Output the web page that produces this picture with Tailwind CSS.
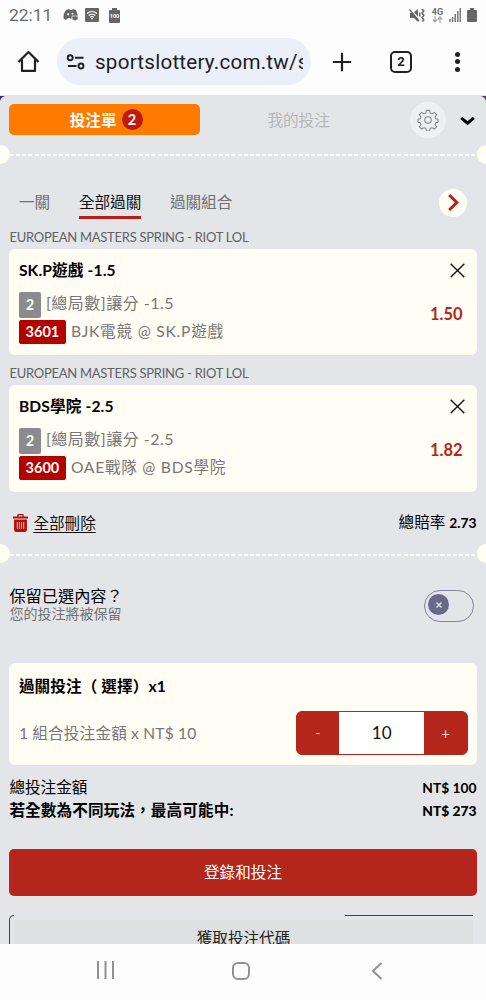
<!DOCTYPE html>
<html lang="zh-Hant">
<head>
<meta charset="utf-8">
<title>投注單</title>
<script src="https://cdn.jsdelivr.net/npm/@tailwindcss/browser@4"></script>
</head>
<body class="w-[486px] h-[1000px] overflow-hidden bg-[#fdfdfd] flex flex-col font-[Lato,'Noto_Sans_CJK_TC',sans-serif] text-black whitespace-nowrap">

<!-- status bar -->
<header class="h-[30px] mb-px shrink-0 flex items-center pl-[9px] pr-[9px] text-[#6b6b6b] font-[Roboto,sans-serif]">
  <span class="text-[17.400px] leading-[30px] w-[54px]">22:11</span>
  <svg class="w-[15px] h-[14px]" viewBox="0 0 15 14"><path fill="#666" d="M3 2 6 1l1 1h2l1-1 3 1 2 6H9.500l-1 3-2-1H5l-2 2-2.500-1.500Q0 6 3 2z"/><circle cx="5.200" cy="6.300" r="1.100" fill="#fff"/><circle cx="9.500" cy="5.800" r="1" fill="#fff"/><path fill="#666" stroke="#fff" stroke-width=".7" d="M9 8h6v4h-2l-1 1.500-1-1.500H9z"/></svg>
  <svg class="w-[14px] h-[14px] ml-[7px]" viewBox="0 0 14 14"><rect width="14" height="14" rx="1" fill="#666"/><g fill="none" stroke="#fff" stroke-width="1.100"><path d="M2 5.500q5-4 10 0M3.700 7.500q3.300-2.600 6.600 0M5.300 9.300q1.700-1.300 3.400 0"/></g><circle cx="7" cy="10.800" r=".8" fill="#fff"/></svg>
  <span class="ml-[10px] flex flex-col items-center w-[11px]"><i class="w-[5px] h-[2px] bg-[#666]"></i><b class="w-[11px] h-[13px] rounded-[1px] bg-[#666] text-white text-[5.500px] leading-[13px] text-center">100</b></span>
  <svg class="w-[16px] h-[15px] ml-auto" viewBox="0 0 16 15"><path fill="#666" d="M1 5h3l5-4v13L5 10H1z"/><path stroke="#fff" stroke-width="1.600" d="M1 1l10 11"/><path stroke="#666" stroke-width="1.200" d="M.5 1.500 10 13"/><path fill="none" stroke="#666" stroke-width="1.500" d="m13 1 1.800 2L13 5l1.800 2.500L13 9.500l1.800 2.500-1.500 1.500M10.800 4.500v4"/></svg>
  <span class="ml-[6px] w-[13px] text-center text-[9px] leading-[8px] font-bold">4G<svg class="w-[11px] h-[7px] mx-auto block" viewBox="0 0 11 7"><path fill="none" stroke="#aaa" stroke-width="1.200" d="M3 0v6M.7 3.500 3 6l2.300-2.500M8 7V1M5.700 3.500 8 1l2.300 2.500"/></svg></span>
  <svg class="w-[12px] h-[14px] ml-[5px]" viewBox="0 0 12 14"><path stroke="#777" stroke-width="1.500" d="M1 14v-3M3.600 14V9M6.200 14V6M8.800 14V3M11.300 14V0"/></svg>
  <svg class="w-[10px] h-[14px] ml-[6px]" viewBox="0 0 10 14"><path fill="#666" d="M3 0h4v2h2q1 0 1 1v10q0 1-1 1H1q-1 0-1-1V3q0-1 1-1h2z"/></svg>
</header>

<!-- browser toolbar -->
<div class="h-[64px] shrink-0 flex items-center pl-[17px] pb-[3px] font-[Roboto,sans-serif] text-[#202124]">
  <svg class="w-[23px] h-[23px]" viewBox="0 0 23 23" fill="none" stroke="#202124" stroke-width="2.200"><path d="M1.500 12 11.500 2l10 10M5 9.500v11.400h13V9.500" stroke-linejoin="round"/></svg>
  <div class="ml-[17px] w-[254px] h-[47px] rounded-full bg-[#ebeff9] flex items-center pl-[9px]">
    <svg class="w-[20px] h-[18px]" viewBox="0 0 20 18" fill="none" stroke="#202124" stroke-width="1.900"><circle cx="4.200" cy="4.800" r="2.500"/><path d="M9 4.800h8.500M2 13h8.500"/><circle cx="15" cy="13" r="2.500"/></svg>
    <span class="ml-[9px] mt-[2px] w-[207.500px] overflow-hidden text-[20.600px] leading-[30px] pb-[1px] tracking-[0.230px]">sportslottery.com.tw/s</span>
  </div>
  <svg class="w-[20px] h-[20px] ml-[21px]" viewBox="0 0 20 20"><path stroke="#202124" stroke-width="2.200" d="M10 .8v18.400M.8 10h18.400"/></svg>
  <span class="ml-[38px] w-[22px] h-[22px] border-2 border-[#202124] rounded-[5px] text-[13px] leading-[18px] font-bold text-center">2</span>
  <span class="ml-[43px] w-[5px] flex flex-col gap-[2.500px]"><i class="size-[5px] rounded-full bg-[#202124]"></i><i class="size-[5px] rounded-full bg-[#202124]"></i><i class="size-[5px] rounded-full bg-[#202124]"></i></span>
</div>

<main class="h-[849px] shrink-0 relative overflow-hidden bg-[#e3e5e8] px-[9.400px] pt-[9px] flex flex-col">
  <svg class="absolute left-0 top-0 w-[6px] h-[6px]" viewBox="0 0 6 6"><path fill="#302c78" d="M0 1h5Q1 2 0 6z"/></svg>
  <svg class="absolute right-0 top-0 w-[6px] h-[6px]" viewBox="0 0 6 6"><path fill="#4b3b61" d="M6 1H1q4 1 5 5z"/></svg>

  <div class="h-[31px] shrink-0 flex items-center">
    <div class="w-[190.500px] h-[30.500px] bg-[#ff7b00] rounded-[5px] flex items-center justify-center pl-[3px] text-[15.600px] leading-[30px] font-bold text-[#fffdf5]">投注單<span class="ml-[5px] size-[21px] rounded-full bg-[#bf1a10] text-[14.500px] leading-[21px] text-center">2</span></div>
    <span class="ml-[67.500px] text-[15.600px] text-[#b5b7ba] leading-[30px] w-[63px]">我的投注</span>
    <span class="ml-[79.500px] size-[36px] rounded-full bg-[#eff0f4] flex items-center justify-center"><svg class="size-[22px]" viewBox="0 0 24 24" fill="none" stroke="#808286" stroke-width="1.100" stroke-linejoin="round"><circle cx="12" cy="12" r="3.600"/><path d="M10.200 1.500h3.600l.5 2.900 2 .9 2.500-1.700 2.600 2.600-1.700 2.500.9 2 2.400.5v3.200l-2.400.5-.9 2 1.700 2.500-2.600 2.600-2.500-1.700-2 .9-.5 2.900h-3.600l-.5-2.900-2-.9-2.500 1.700-2.600-2.600 1.700-2.500-.9-2-2.400-.5v-3.200l2.400-.5.9-2-1.700-2.500 2.600-2.600 2.500 1.700 2-.9z"/></svg></span>
    <svg class="w-[15px] h-[10px] ml-[14.500px] mt-[2px]" viewBox="0 0 15 10"><path fill="none" stroke="#000" stroke-width="3" d="m1.200 1.800 6.300 5.400 6.300-5.400"/></svg>
  </div>

  <div class="h-[19px] mt-[9.500px] -mx-[9.400px] shrink-0 flex items-center justify-between">
    <i class="w-[10px] h-[19px] rounded-r-full bg-[#fffdf4]"></i>
    <i class="flex-1 h-[2px] mt-[1px] bg-[repeating-linear-gradient(90deg,#fffdf4_0_4px,transparent_4px_6.150px)]"></i>
    <i class="w-[9px] h-[19px] rounded-l-full bg-[#fffdf4]"></i>
  </div>

  <nav class="h-[56px] mt-[25px] shrink-0 flex pl-[9.500px] text-[15.600px] leading-[26px] text-[#6f7173]">
    <span class="w-[60px]">一關</span>
    <span class="w-[62.500px] h-[30.500px] border-b-[3px] border-[#bb1a16] text-[#111]">全部過關</span>
    <span class="ml-[28.500px]">過關組合</span>
    <span class="ml-auto mr-[9.500px] size-[28px] rounded-full bg-[#fffdf4] flex items-center justify-center"><svg class="w-[11px] h-[17px]" viewBox="0 0 11 17"><path fill="none" stroke="#b4251b" stroke-width="3" d="m1.200 1 7.600 7.500L1.200 16"/></svg></span>
  </nav>

  <h2 class="h-[18px] -mt-[17px] shrink-0 text-[13px] leading-[18px] text-[#606266] tracking-[-0.260px]">EUROPEAN MASTERS SPRING - RIOT LOL</h2>

  <section class="h-[106px] mt-[3.500px] shrink-0 rounded-[6px] bg-[#fffdf4] px-[9.500px] pt-[10px] flex justify-between">
    <div>
      <h3 class="h-[22px] text-[15.600px] leading-[22px] font-bold tracking-[0.150px]">SK.P遊戲 -1.5</h3>
      <p class="h-[28px] mt-[9.500px] flex items-center text-[16px] leading-[26px] text-[#777]"><b class="w-[22px] h-[26px] rounded-[2px] bg-[#8b8b8b] text-[#fffdf4] text-[14.500px] text-center mr-[5px]">2</b><span class="tracking-[0.500px] -mt-[3px]">[總局數]讓分 -1.5</span></p>
      <p class="h-[27px] flex items-center text-[15.600px] leading-[24px] text-[#777]"><b class="w-[47px] h-[24px] rounded-[2px] bg-[#b30000] text-[#fffdf4] text-[14.500px] text-center mr-[5px]">3601</b><span class="tracking-[0.780px] -mt-[2px]">BJK電競 @ SK.P遊戲</span></p>
    </div>
    <div class="flex flex-col items-end">
      <svg class="size-[15px] mt-[3.500px] mr-[2.500px]" viewBox="0 0 15 15"><path stroke="#111" stroke-width="1.400" d="m.7.700 13.600 13.600M14.300.700.700 14.300"/></svg>
      <b class="mt-[25px] mr-[4.500px] text-[16.500px] leading-[22px] text-[#b4251b]">1.50</b>
    </div>
  </section>

  <h2 class="h-[18px] mt-[8.500px] shrink-0 text-[13px] leading-[18px] text-[#606266] tracking-[-0.260px]">EUROPEAN MASTERS SPRING - RIOT LOL</h2>

  <section class="h-[106.500px] mt-[3.500px] shrink-0 rounded-[6px] bg-[#fffdf4] px-[9.500px] pt-[10px] flex justify-between">
    <div>
      <h3 class="h-[22px] text-[15.600px] leading-[22px] font-bold tracking-[0.150px]">BDS學院 -2.5</h3>
      <p class="h-[28px] mt-[9.500px] flex items-center text-[16px] leading-[26px] text-[#777]"><b class="w-[22px] h-[26px] rounded-[2px] bg-[#8b8b8b] text-[#fffdf4] text-[14.500px] text-center mr-[5px]">2</b><span class="tracking-[0.500px] -mt-[3px]">[總局數]讓分 -2.5</span></p>
      <p class="h-[27px] flex items-center text-[15.600px] leading-[24px] text-[#777]"><b class="w-[47px] h-[24px] rounded-[2px] bg-[#b30000] text-[#fffdf4] text-[14.500px] text-center mr-[5px]">3600</b><span class="tracking-[0.750px] -mt-[2px]">OAE戰隊 @ BDS學院</span></p>
    </div>
    <div class="flex flex-col items-end">
      <svg class="size-[15px] mt-[3.500px] mr-[2.500px]" viewBox="0 0 15 15"><path stroke="#111" stroke-width="1.400" d="m.7.700 13.600 13.600M14.300.700.700 14.300"/></svg>
      <b class="mt-[25.500px] mr-[4.500px] text-[16.500px] leading-[22px] text-[#b4251b]">1.82</b>
    </div>
  </section>

  <div class="h-[24px] mt-[19px] shrink-0 flex items-center text-[15.600px] leading-[24px]">
    <svg class="w-[15px] h-[18px] ml-[3.500px] mr-[5.500px]" viewBox="0 0 14 18" preserveAspectRatio="none"><path fill="#b40f0b" d="M0 2.500h4V1q0-1 1-1h4q1 0 1 1v1.500h4v2H0zM1 5.500h12V16q0 2-2 2H3q-2 0-2-2z"/><path fill="#e3e5e8" d="M5.200 1.300h3.600v1.200H5.200z"/><path stroke="#efc3c2" stroke-width=".9" d="M4 8v7M6 8v7M8 8v7M10 8v7"/></svg>
    <span class="underline underline-offset-[3px] decoration-1 text-[#111]">全部刪除</span>
    <span class="ml-auto">總賠率 <b class="text-[13.800px]">2.73</b></span>
  </div>

  <div class="h-[19px] mt-[9.500px] -mx-[9.400px] shrink-0 flex items-center justify-between">
    <i class="w-[10px] h-[19px] rounded-r-full bg-[#fffdf4]"></i>
    <i class="flex-1 h-[2px] mt-[2px] bg-[repeating-linear-gradient(90deg,#fffdf4_0_4px,transparent_4px_6.150px)]"></i>
    <i class="w-[9px] h-[19px] rounded-l-full bg-[#fffdf4]"></i>
  </div>

  <div class="h-[40px] mt-[23px] shrink-0 flex justify-between">
    <div>
      <p class="text-[16.200px] leading-[20px]">保留已選內容？</p>
      <p class="text-[14px] leading-[18px] -mt-[1px] text-[#6f7173]">您的投注將被保留</p>
    </div>
    <div class="w-[50px] h-[32px] mr-[3px] mt-[4px] rounded-full border border-[#8585a0] pl-[3.500px] pt-[3px]"><i class="size-[21px] rounded-full bg-[#696a89] flex items-center justify-center"><svg class="size-[6px]" viewBox="0 0 6 6"><path stroke="#e3e5e8" stroke-width="1.300" d="m.5.500 5 5m0-5-5 5"/></svg></i></div>
  </div>

  <section class="h-[102px] mt-[36.500px] shrink-0 rounded-[6px] bg-[#fffdf4] px-[9.500px] pt-[12px]">
    <h3 class="h-[22px] text-[15.600px] leading-[22px] font-bold tracking-[0.120px]">過關投注（ 選擇）x1</h3>
    <div class="flex items-center justify-between mt-[14px] text-[15.600px]">
      <span class="text-[#777] leading-[24px] tracking-[0.180px]">1 組合投注金額 x NT$ 10</span>
      <div class="w-[172px] h-[44px] -mr-[0.600px] rounded-[6px] border border-[#b4251b] bg-[#b4251b] overflow-hidden flex text-center leading-[42px] text-[#efd0cb]"><span class="w-[42.500px] text-[14px]">-</span><span class="w-[85px] bg-white text-[#111] text-[17px]">10</span><span class="flex-1">+</span></div>
    </div>
  </section>

  <div class="mt-[11.500px] shrink-0 text-[15.600px] leading-[23px]">
    <p class="flex justify-between"><span>總投注金額</span><b class="text-[13.800px]">NT$ 100</b></p>
    <p class="flex justify-between font-bold"><span class="tracking-[0.120px]">若全數為不同玩法，最高可能中:</span><b class="text-[13.800px]">NT$ 273</b></p>
  </div>

  <div class="h-[47px] mt-[26.500px] shrink-0 rounded-[5px] bg-[#b4251b] text-center text-[15.600px] leading-[47px] text-white">登錄和投注</div>

  <div class="mt-[19px] flex-1 min-h-0 overflow-hidden relative">
    <i class="absolute left-0 top-0 w-[5px] h-[40px] border-l border-t border-[#444] rounded-tl-[5px]"></i>
    <i class="absolute right-[4px] top-0 w-[128px] h-px bg-[#444]"></i>
    <p class="ml-[5px] mr-[4px] mt-[5px] h-[40px] bg-[#dfe0e1] text-center text-[15.600px] leading-[36px] text-[#222]">獲取投注代碼</p>
  </div>
</main>

<!-- system navigation -->
<footer class="flex-1 flex items-start pt-[17px] pl-[96px]">
  <svg class="w-[18px] h-[18px]" viewBox="0 0 18 18"><path stroke="#929292" stroke-width="2" d="M2 0v18M9.500 0v18M17 0v18"/></svg>
  <i class="ml-[118px] mt-px size-[18px] border-2 border-[#929292] rounded-[6px]"></i>
  <svg class="w-[12px] h-[18px] ml-[121px] mt-px" viewBox="0 0 12 18"><path fill="none" stroke="#929292" stroke-width="2" d="M10.500 1 2 9l8.500 8"/></svg>
</footer>
</body>
</html>
